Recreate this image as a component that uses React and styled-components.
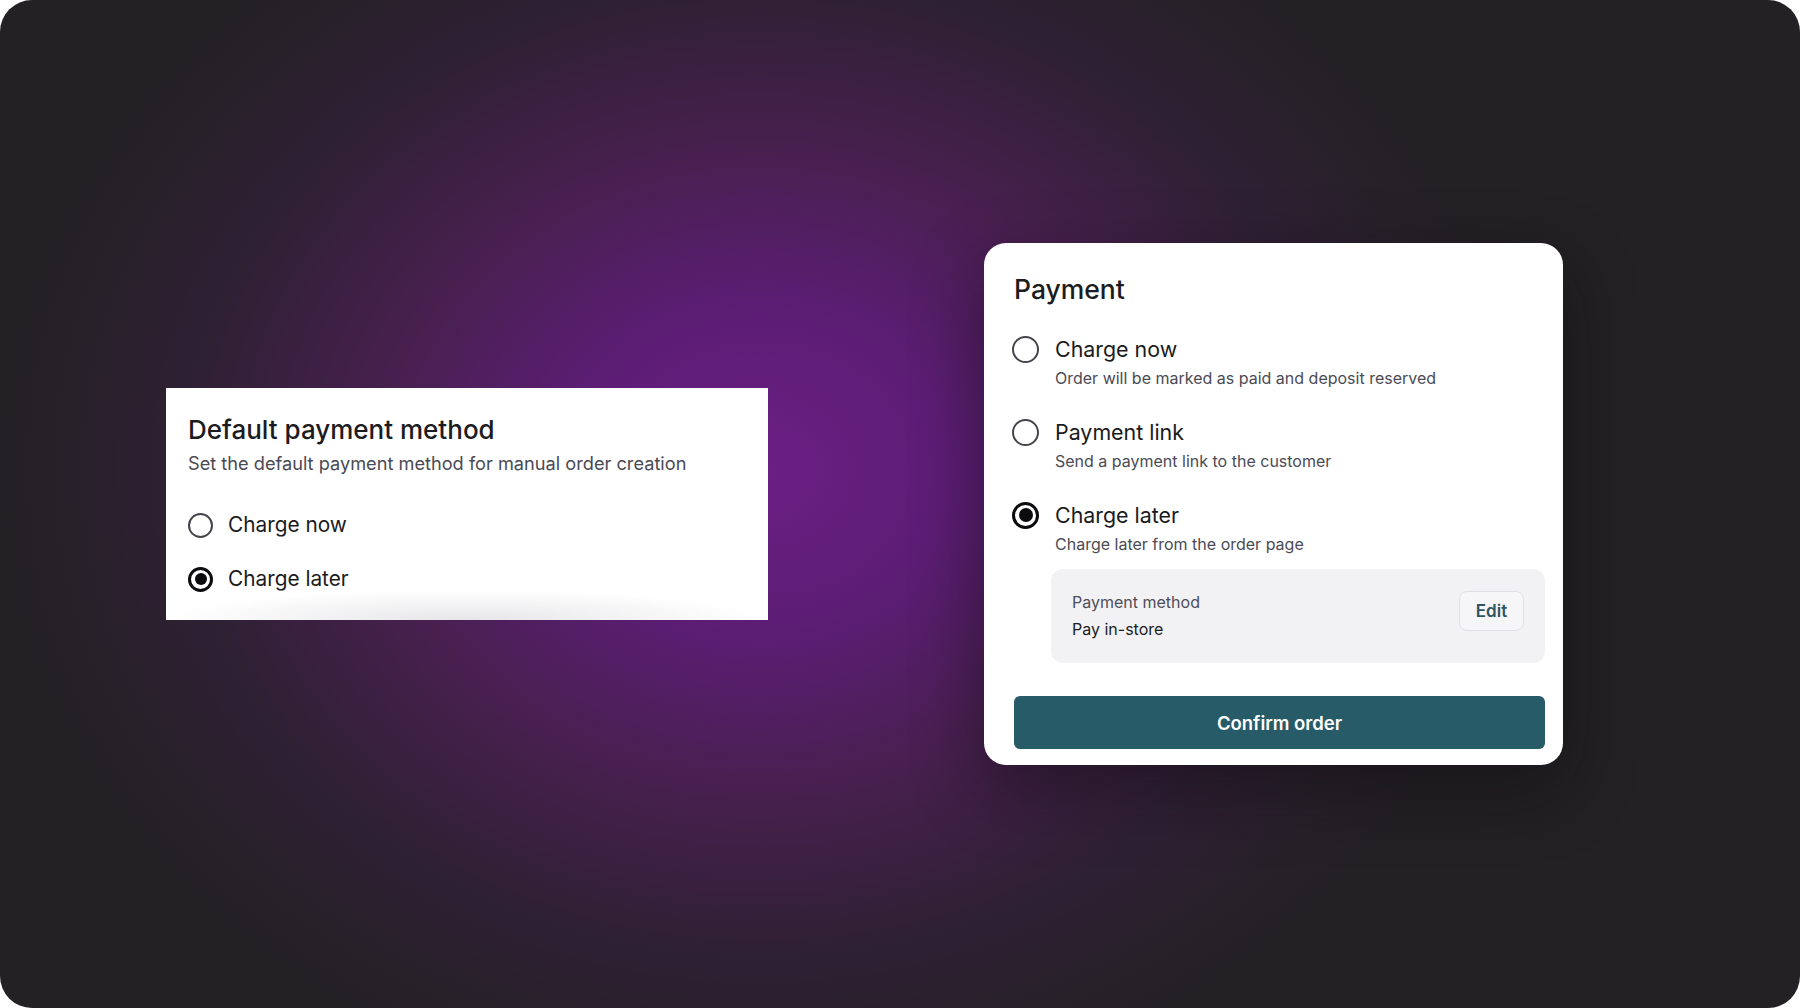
import React from "react";
import styled, { createGlobalStyle } from "styled-components";

const GlobalStyle = createGlobalStyle`
  html, body {
    margin: 0;
    padding: 0;
    background: #ffffff;
  }
  body {
    font-family: Inter, "Noto Sans", "Liberation Sans", sans-serif;
    -webkit-font-smoothing: antialiased;
  }
`;

const Frame = styled.div`
  width: 1800px;
  height: 1008px;
  box-sizing: border-box;
  border-radius: 32px;
  overflow: hidden;
  background:
    radial-gradient(ellipse 760px 640px at 760px 470px,
      #6b1f84 0%,
      #5c1d75 25%,
      #48204f 50%,
      #2f2034 75%,
      #232124 100%),
    #232124;
  display: flex;
  align-items: center;
  padding: 0 237px 0 166px;
  gap: 216px;
`;

const SettingsCard = styled.section`
  width: 602px;
  height: 232px;
  box-sizing: border-box;
  padding: 26px 22px 25px;
  background:
    radial-gradient(ellipse 300px 30px at 300px 232px, rgba(210, 208, 214, 0.55), rgba(255, 255, 255, 0) 100%),
    #ffffff;
  color: #1c1c21;
`;

const CardTitle = styled.h2`
  margin: 0;
  font-size: ${({ $size }) => $size}px;
  line-height: 32px;
  font-weight: 500;
  color: #1b1b20;
`;

const CardSubtitle = styled.p`
  margin: 5px 0 0;
  font-size: 18.2px;
  line-height: 24px;
  color: #4a4a54;
`;

const RadioList = styled.div`
  display: flex;
  flex-direction: column;
  gap: ${({ $gap }) => $gap}px;
  margin-top: ${({ $top }) => $top}px;
`;

const RadioRow = styled.label`
  display: flex;
  align-items: center;
  gap: ${({ $gap }) => $gap}px;
  height: 30px;
`;

const RadioMark = styled.span`
  flex: none;
  position: relative;
  width: ${({ $size }) => $size}px;
  height: ${({ $size }) => $size}px;
  box-sizing: border-box;
  border-radius: 50%;
  border: ${({ $checked }) => ($checked ? "3px solid #0c0c0e" : "2.5px solid #44444c")};
  background: #ffffff;

  &::after {
    content: "";
    display: ${({ $checked }) => ($checked ? "block" : "none")};
    position: absolute;
    inset: 3.5px;
    border-radius: 50%;
    background: #0c0c0e;
  }
`;

const RadioLabel = styled.span`
  font-size: ${({ $size }) => $size}px;
  line-height: 28px;
  color: #1b1b20;
`;

const PaymentCard = styled.section`
  width: 579px;
  height: 522px;
  box-sizing: border-box;
  padding: 30px 18px 16px 30px;
  background: #ffffff;
  border-radius: 22px;
  box-shadow: 0 24px 70px rgba(10, 8, 12, 0.45);
  display: flex;
  flex-direction: column;
`;

const Options = styled.div`
  display: flex;
  flex-direction: column;
  gap: 29px;
  margin-top: 30px;
`;

const Option = styled.div`
  display: flex;
  flex-direction: column;
`;

const OptionHead = styled.label`
  display: flex;
  align-items: center;
  gap: 16px;
  height: 28px;
  margin-left: -2px;
`;

const OptionDescription = styled.p`
  margin: 4px 0 0 41px;
  font-size: 16px;
  line-height: 22px;
  color: #4b4b55;
`;

const MethodBox = styled.div`
  margin: 14px 0 0 37px;
  padding: 22px 21px 23px;
  background: #f2f1f4;
  border-radius: 12px;
  display: flex;
  justify-content: space-between;
  align-items: flex-start;
`;

const MethodText = styled.div`
  display: flex;
  flex-direction: column;
  gap: 5px;
`;

const MethodLabel = styled.span`
  font-size: 16px;
  line-height: 22px;
  color: #4e4e58;
`;

const MethodValue = styled.span`
  font-size: 16px;
  line-height: 22px;
  color: #1c1c22;
`;

const EditButton = styled.button`
  width: 65px;
  height: 40px;
  border: 1px solid #e1e0e5;
  border-radius: 8px;
  background: #f6f5f8;
  color: #2e5561;
  font-family: inherit;
  font-size: 17px;
  font-weight: 600;
  cursor: pointer;
`;

const ConfirmButton = styled.button`
  margin-top: 33px;
  height: 53px;
  border: none;
  border-radius: 6px;
  background: #275b68;
  color: #ffffff;
  font-family: inherit;
  font-size: 18.5px;
  font-weight: 600;
  cursor: pointer;
`;

const paymentOptions = [
  { label: "Charge now", description: "Order will be marked as paid and deposit reserved" },
  { label: "Payment link", description: "Send a payment link to the customer" },
  { label: "Charge later", description: "Charge later from the order page", checked: true },
];

export default function App() {
  return (
    <>
      <GlobalStyle />
      <Frame>
        <SettingsCard>
          <CardTitle $size={26}>Default payment method</CardTitle>
          <CardSubtitle>Set the default payment method for manual order creation</CardSubtitle>
          <RadioList $gap={24} $top={35}>
            <RadioRow $gap={15}>
              <RadioMark $size={25} />
              <RadioLabel $size={20.8}>Charge now</RadioLabel>
            </RadioRow>
            <RadioRow $gap={15}>
              <RadioMark $size={25} $checked />
              <RadioLabel $size={20.8}>Charge later</RadioLabel>
            </RadioRow>
          </RadioList>
        </SettingsCard>

        <PaymentCard>
          <CardTitle $size={26.5}>Payment</CardTitle>
          <Options>
            {paymentOptions.map((opt) => (
              <Option key={opt.label}>
                <OptionHead>
                  <RadioMark $size={27} $checked={opt.checked} />
                  <RadioLabel $size={21.4}>{opt.label}</RadioLabel>
                </OptionHead>
                <OptionDescription>{opt.description}</OptionDescription>
              </Option>
            ))}
          </Options>
          <MethodBox>
            <MethodText>
              <MethodLabel>Payment method</MethodLabel>
              <MethodValue>Pay in-store</MethodValue>
            </MethodText>
            <EditButton>Edit</EditButton>
          </MethodBox>
          <ConfirmButton>Confirm order</ConfirmButton>
        </PaymentCard>
      </Frame>
    </>
  );
}
